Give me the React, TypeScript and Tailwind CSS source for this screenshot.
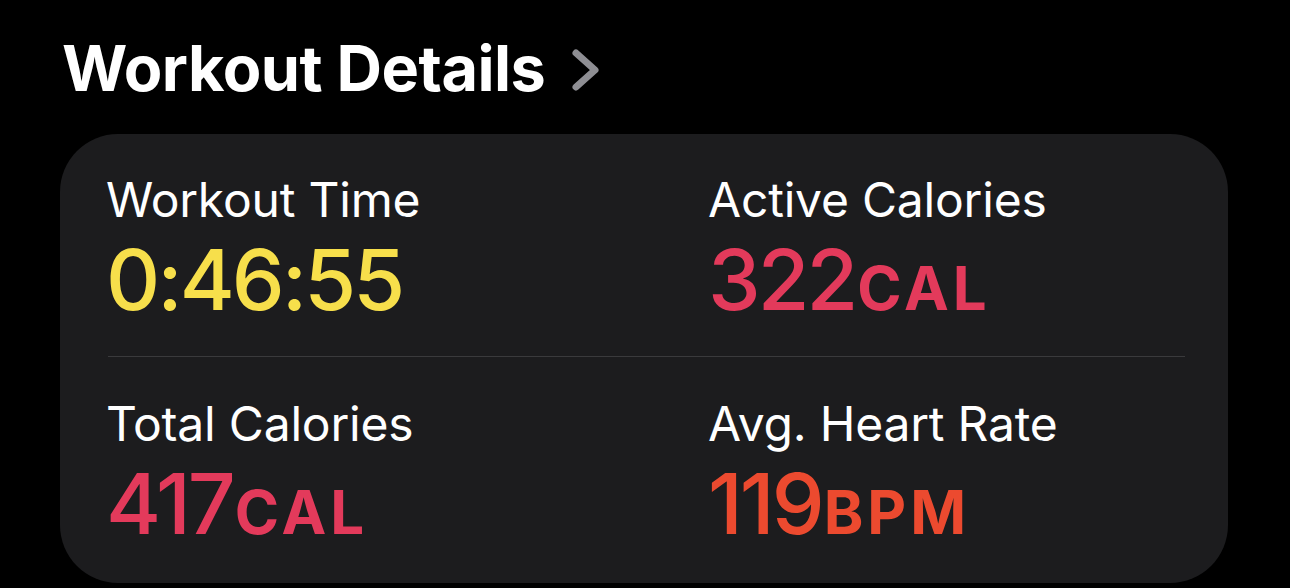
const stats = [
  { label: "Workout Time", value: "0:46:55", unit: "", color: "text-[#f7df4b]" },
  { label: "Active Calories", value: "322", unit: "CAL", color: "text-[#e33a5b]" },
  { label: "Total Calories", value: "417", unit: "CAL", color: "text-[#e33a5b]" },
  { label: "Avg. Heart Rate", value: "119", unit: "BPM", color: "text-[#ec4a2f]" },
];

function Stat({ label, value, unit, color }: (typeof stats)[number]) {
  return (
    <div className="flex flex-col">
      <div className="text-[48px] leading-[56px] tracking-[-0.2px] text-white">{label}</div>
      <div className={`mt-[10px] flex items-baseline leading-[84px] ${color}`}>
        <span className="text-[84px] font-medium tracking-[-3px]">{value}</span>
        {unit && <span className="ml-[2px] text-[60px] font-bold tracking-[4px]">{unit}</span>}
      </div>
    </div>
  );
}

export default function App() {
  return (
    <div className="h-[588px] w-[1290px] overflow-hidden bg-black font-['Inter',sans-serif]">
      <div className="flex items-center gap-[24px] pl-[62px] pt-[28px]">
        <h1 className="text-[63px] font-bold leading-[80px] tracking-[-0.5px] text-white">
          Workout Details
        </h1>
        <svg width="32" height="44" viewBox="0 0 32 44" className="mt-[4px]">
          <path
            d="M7 5 L26 22 L7 39"
            fill="none"
            stroke="#8e8e93"
            strokeWidth="7"
            strokeLinecap="round"
            strokeLinejoin="round"
          />
        </svg>
      </div>
      <div className="ml-[60px] mt-[26px] h-[449px] w-[1168px] rounded-[58px] bg-[#1c1c1e] pl-[46px] pr-[43px] pt-[38px]">
        <div className="grid grid-cols-[602px_1fr]">
          <Stat {...stats[0]} />
          <Stat {...stats[1]} />
        </div>
        <div className="ml-[2px] mt-[26px] h-px bg-[#3a3a3c]" />
        <div className="mt-[39px] grid grid-cols-[602px_1fr]">
          <Stat {...stats[2]} />
          <Stat {...stats[3]} />
        </div>
      </div>
    </div>
  );
}
